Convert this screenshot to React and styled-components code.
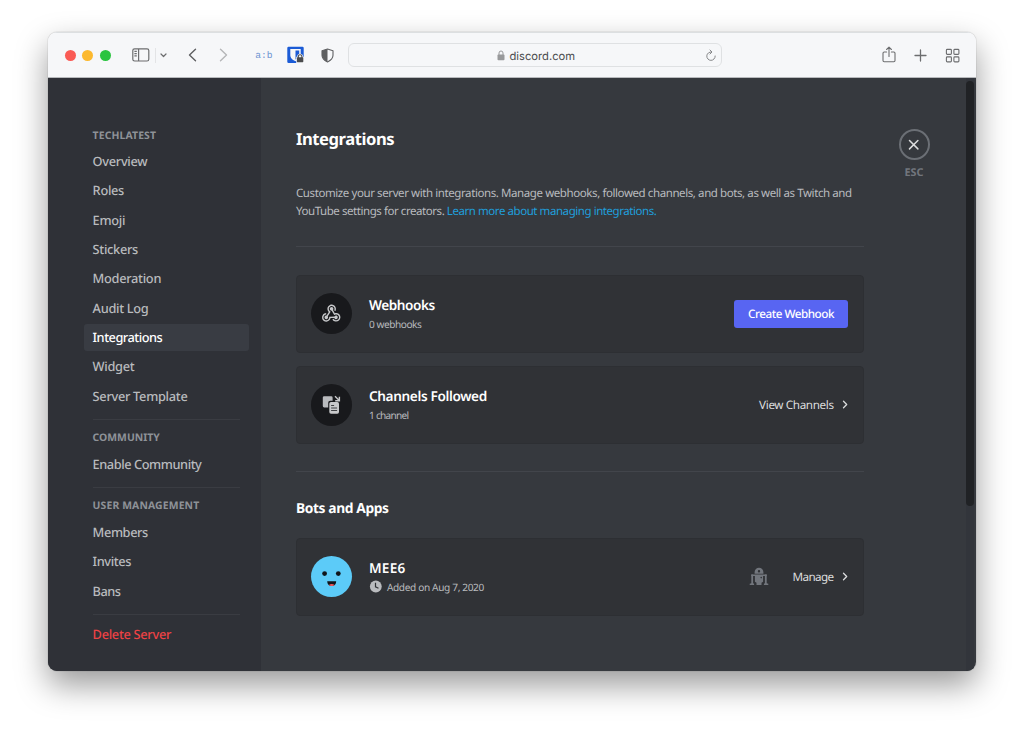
import React from 'react';
import styled, { createGlobalStyle } from 'styled-components';

const GlobalStyle = createGlobalStyle`
  * {
    box-sizing: border-box;
  }
  body {
    margin: 0;
    background-color: #ffffff;
    font-family: 'Noto Sans', 'Open Sans', sans-serif;
    text-rendering: geometricPrecision;
    overflow: hidden;
  }
  svg {
    display: block;
    flex-shrink: 0;
  }
`;

const Page = styled('div')`
  width: 1024px;
  height: 735px;
  padding: 32px 48px 64px;
`;

const Window = styled('div')`
  width: 928px;
  height: 639px;
  border-radius: 9px;
  overflow: hidden;
  display: flex;
  flex-direction: column;
  box-shadow: 0 0 1px rgba(0, 0, 0, 0.5), 0 14px 32px rgba(0, 0, 0, 0.4);
`;

const Toolbar = styled('header')`
  height: 46px;
  flex-shrink: 0;
  display: flex;
  align-items: center;
  background-color: #f6f7f9;
  border-top: 1px solid #dcdfe1;
  border-bottom: 1px solid #b8babd;
  padding: 0 16px 0 17px;
`;

const Lights = styled('div')`
  display: flex;
  gap: 6.4px;
`;

const Light = styled('span')`
  width: 11px;
  height: 11px;
  border-radius: 50%;
  background-color: ${(props) => props.$color};
`;

const Tool = styled('div')`
  margin-left: ${(props) => props.$gap}px;
`;

const ToolDivider = styled('span')`
  width: 1px;
  height: 15px;
  margin-left: 5px;
  background-color: #e3e4e6;
`;

const Shortcut = styled('span')`
  margin-left: 27px;
  width: 18px;
  font-family: 'Liberation Mono', monospace;
  font-size: 9.6px;
  color: #6f94d2;
`;

const AddressBar = styled('div')`
  width: 374px;
  height: 24px;
  margin-left: 14px;
  border: 1px solid #dfe1e3;
  border-radius: 6px;
  display: grid;
  grid-template-columns: 1fr auto 1fr;
  align-items: center;
  padding: 0 4px;
`;

const Address = styled('div')`
  grid-column: 2;
  display: flex;
  align-items: center;
  gap: 5px;
  padding: 1px 0 0 1px;
  font-family: Inter, sans-serif;
  font-size: 11.2px;
  color: #4a4b4d;
`;

const Reload = styled('div')`
  justify-self: end;
`;

const ToolsRight = styled('div')`
  margin-left: auto;
  display: flex;
  align-items: center;
  gap: 18px;
`;

const ShareTool = styled('div')`
  padding-bottom: 2px;
`;

const Body = styled('div')`
  flex: 1;
  min-height: 0;
  display: flex;
  background-color: #36393e;
`;

const Sidebar = styled('nav')`
  width: 213px;
  flex-shrink: 0;
  background-color: #2f3137;
  padding: 45.6px 11.7px 0 36px;
`;

const GroupTitle = styled('div')`
  height: 24.6px;
  line-height: 24.6px;
  padding-left: 8.6px;
  font-size: 10.4px;
  font-weight: 700;
  letter-spacing: ${(props) => props.$spacing || 0}px;
  color: #8e9297;
  white-space: nowrap;
`;

const NavItem = styled('div')`
  height: 27.3px;
  line-height: 27.3px;
  margin-bottom: 2px;
  padding-left: 8.6px;
  border-radius: 3px;
  font-size: 12.8px;
  font-weight: 500;
  letter-spacing: ${(props) => props.$spacing || -0.3}px;
  white-space: nowrap;
  color: ${(props) =>
    props.$danger ? '#ed4245' : props.$active ? '#ffffff' : '#b9bbbe'};
  background-color: ${(props) => (props.$active ? '#393c43' : 'transparent')};
`;

const NavDivider = styled('div')`
  height: 1px;
  margin: 9.3px 9px 6px;
  background-color: #3a3c42;
`;

const Main = styled('main')`
  width: 568px;
  margin-left: 35px;
`;

const Title = styled('h1')`
  margin: 49.4px 0 0;
  height: 24px;
  line-height: 24px;
  font-size: 16.6px;
  font-weight: 700;
  letter-spacing: ${(props) => props.$spacing}px;
  color: #ffffff;
`;

const Description = styled('p')`
  margin: 34px 0 0;
  font-size: 11.5px;
  line-height: 17.3px;
  color: #b9bbbe;
`;

const Line = styled('span')`
  display: block;
  white-space: nowrap;
  letter-spacing: ${(props) => props.$spacing}px;
`;

const Link = styled('a')`
  color: #1f9fdc;
`;

const Divider = styled('div')`
  height: 1px;
  margin: ${(props) => props.$margin};
  background-color: #42454b;
`;

const Card = styled('section')`
  height: 78px;
  margin-bottom: 13.4px;
  border: 1px solid #2d2f33;
  border-radius: 4px;
  background-color: #303236;
  padding: 0 15px 0.4px 13.5px;
  display: flex;
  align-items: center;
`;

const Avatar = styled('div')`
  width: 41.4px;
  height: 41.4px;
  border-radius: 50%;
  background-color: ${(props) => props.$color};
  display: flex;
  align-items: center;
  justify-content: center;
`;

const CardText = styled('div')`
  flex: 1;
  margin-left: 17px;
`;

const CardTitle = styled('div')`
  height: 20px;
  line-height: 20px;
  font-size: 13.6px;
  font-weight: 600;
  letter-spacing: ${(props) => props.$spacing || 0}px;
  color: #ffffff;
`;

const CardNote = styled('div')`
  height: 18px;
  font-size: 10.1px;
  letter-spacing: ${(props) => props.$spacing || 0}px;
  color: #b9bbbe;
  display: flex;
  align-items: center;
  gap: 5px;
`;

const Button = styled('button')`
  width: 114px;
  height: 28px;
  padding: 0;
  border: none;
  border-radius: 3px;
  background-color: #5865f2;
  font-family: inherit;
  font-size: 11.7px;
  font-weight: 500;
  letter-spacing: ${(props) => props.$spacing || 0}px;
  text-rendering: geometricPrecision;
  color: #ffffff;
`;

const Action = styled('div')`
  display: flex;
  align-items: center;
  gap: 8.4px;
  font-size: 11.7px;
  letter-spacing: ${(props) => props.$spacing || 0}px;
  color: #dcddde;
`;

const BotMark = styled('div')`
  margin-right: 23px;
`;

const Subtitle = styled('h2')`
  margin: 0 0 19px;
  height: 20px;
  line-height: 20px;
  font-size: 13.8px;
  font-weight: 700;
  letter-spacing: ${(props) => props.$spacing || 0}px;
  color: #ffffff;
`;

const Close = styled('div')`
  width: 32px;
  margin: 51px 0 0 34px;
  display: flex;
  flex-direction: column;
  align-items: center;
`;

const CloseCircle = styled('div')`
  width: 31px;
  height: 31px;
  border: 2px solid #6b6f75;
  border-radius: 50%;
  display: flex;
  align-items: center;
  justify-content: center;
`;

const CloseLabel = styled('div')`
  margin-top: 5px;
  line-height: 16px;
  font-size: 10.8px;
  font-weight: 700;
  color: #72767d;
`;

const ScrollTrack = styled('div')`
  width: 8px;
  margin-left: auto;
  margin-right: 2px;
  padding-top: 3px;
  background-color: #32353b;
`;

const ScrollThumb = styled('div')`
  width: 8px;
  height: 425px;
  border-radius: 4px;
  background-color: #202225;
`;

const SidebarIcon = () => (
  <svg width="18" height="14" viewBox="0 0 18 14" fill="none" stroke="#6c6d6f" strokeWidth="1.2">
    <rect x="0.8" y="0.8" width="16" height="12.2" rx="1.8" />
    <path d="M6.6 1v12M2.4 3.4h2.4M2.4 5.6h2.4M2.4 7.8h2.4" />
  </svg>
);

const Arrow = ({ d, color, w = 9, h = 14, stroke = 1.4 }) => (
  <svg width={w} height={h} viewBox={`0 0 ${w} ${h}`} fill="none" stroke={color} strokeWidth={stroke} strokeLinecap="round" strokeLinejoin="round">
    <path d={d} />
  </svg>
);

const VaultIcon = () => (
  <svg width="18" height="18" viewBox="0 0 18 18">
    <rect x="0.3" y="0.8" width="16.4" height="16.2" rx="1.2" fill="#1b5bd6" />
    <path d="M3.3 3h10.4v6.2c0 3-2.8 4.900-5.200 6-2.400-1.100-5.200-3-5.200-6z" fill="#f6f7f9" />
    <path d="M8.5 4.500h3.700v4.400c0 2-1.900 3.700-3.700 4.600z" fill="#1b5bd6" />
    <path d="M9.200 17.200v-6.500h1a2.900 2.900 0 0 1 5.800 0h1v6.500z" fill="#f6f7f9" />
    <rect x="9.900" y="11.200" width="6.400" height="5" rx="0.6" fill="#4a4b4d" />
    <path d="M11.300 12v-1.500a1.800 1.800 0 0 1 3.600 0V12" fill="none" stroke="#4a4b4d" strokeWidth="1.1" />
  </svg>
);

const ShieldIcon = () => (
  <svg width="13" height="15" viewBox="0 0 13 15">
    <path d="M6.500 1 12 2.700v4.600c0 3.100-2.600 5.300-5.500 6.600C3.600 12.600 1 10.400 1 7.300V2.700z" fill="none" stroke="#5e5f61" strokeWidth="1.1" strokeLinejoin="round" />
    <path d="M6.500 1v12.900C3.600 12.600 1 10.400 1 7.300V2.700z" fill="#5e5f61" />
  </svg>
);

const LockIcon = () => (
  <svg width="8" height="11" viewBox="0 0 8 11">
    <rect x="0.5" y="4.6" width="7" height="5.6" rx="0.9" fill="#98999b" />
    <path d="M2 5V3a2 2 0 0 1 4 0v2" fill="none" stroke="#98999b" strokeWidth="1" />
  </svg>
);

const ReloadIcon = () => (
  <svg width="12" height="13" viewBox="0 0 12 13" fill="none" stroke="#858688" strokeWidth="1" strokeLinecap="round" strokeLinejoin="round">
    <path d="M6.600 3A4.200 4.200 0 1 0 10.200 7M5 1l2 2-2 2" />
  </svg>
);

const ShareIcon = () => (
  <svg width="14" height="17" viewBox="0 0 14 17" fill="none" stroke="#6c6d6f" strokeWidth="1.1" strokeLinecap="round" strokeLinejoin="round">
    <path d="M4.600 6H2.200a1.200 1.200 0 0 0-1.200 1.200v7.300a1.200 1.200 0 0 0 1.200 1.200h9.600a1.200 1.200 0 0 0 1.200-1.200V7.200A1.200 1.200 0 0 0 11.800 6H9.400M7 10.500V1.200M4.600 3.500 7 1.100l2.400 2.400" />
  </svg>
);

const PlusIcon = () => (
  <svg width="13" height="13" viewBox="0 0 13 13" fill="none" stroke="#6c6d6f" strokeWidth="1.3" strokeLinecap="round">
    <path d="M6.500 1v11M1 6.500h11" />
  </svg>
);

const GridIcon = () => (
  <svg width="15" height="15" viewBox="0 0 15 15" fill="none" stroke="#6c6d6f" strokeWidth="1.1">
    <rect x="1.4" y="1.4" width="5" height="5" rx="0.9" />
    <rect x="8.9" y="1.4" width="5" height="5" rx="0.9" />
    <rect x="1.4" y="8.9" width="5" height="5" rx="0.9" />
    <rect x="8.9" y="8.9" width="5" height="5" rx="0.9" />
  </svg>
);

const WebhookIcon = () => (
  <svg width="22.5" height="22.5" viewBox="0 0 24 24" fill="#c8c9cb">
    <path d="M10.460 19C9 21.070 6.150 21.590 4.090 20.150C2.040 18.710 1.560 15.840 3 13.750C3.870 12.500 5.210 11.830 6.580 11.770L6.630 13.200C5.720 13.270 4.840 13.740 4.270 14.560C3.270 16 3.580 17.940 4.950 18.910C6.330 19.870 8.260 19.500 9.260 18.070C9.570 17.620 9.750 17.130 9.820 16.630V15.620L15.400 15.580L15.470 15.470C16 14.550 17.150 14.230 18.050 14.750C18.950 15.270 19.260 16.430 18.730 17.350C18.200 18.260 17.040 18.580 16.140 18.060C15.730 17.830 15.440 17.460 15.310 17.040L11.240 17.060C11.130 17.730 10.870 18.380 10.460 19M17.740 11.860C20.270 12.170 22.070 14.440 21.760 16.930C21.450 19.430 19.150 21.200 16.620 20.890C15.130 20.710 13.900 19.860 13.190 18.680L14.430 17.960C14.920 18.730 15.750 19.280 16.750 19.410C18.500 19.620 20.050 18.430 20.260 16.760C20.470 15.090 19.230 13.560 17.500 13.350C16.960 13.290 16.440 13.360 15.970 13.530L15.120 13.970L12.540 9.200H12.320C11.260 9.160 10.410 8.290 10.440 7.250C10.470 6.210 11.400 5.400 12.450 5.440C13.500 5.500 14.330 6.350 14.300 7.390C14.280 7.830 14.110 8.230 13.840 8.540L15.740 12.050C16.360 11.850 17.040 11.780 17.740 11.860M8.250 9.140C7.250 6.790 8.310 4.100 10.620 3.120C12.940 2.140 15.620 3.250 16.620 5.600C17.210 6.970 17.090 8.470 16.420 9.670L15.180 8.950C15.600 8.140 15.670 7.150 15.270 6.220C14.590 4.620 12.780 3.850 11.230 4.500C9.670 5.160 8.970 7 9.650 8.600C9.930 9.260 10.400 9.770 10.970 10.110L11.360 10.320L8.290 15.310C8.320 15.360 8.360 15.420 8.390 15.500C8.880 16.410 8.540 17.560 7.620 18.050C6.710 18.540 5.560 18.180 5.060 17.240C4.570 16.310 4.910 15.160 5.830 14.670C6.220 14.460 6.650 14.410 7.060 14.500L9.370 10.730C8.900 10.300 8.500 9.760 8.250 9.140Z" />
  </svg>
);

const FollowIcon = () => (
  <svg width="19" height="20" viewBox="0 0 19 20">
    <path d="M2.200 1.200h7a1.400 1.400 0 0 1 1.400 1.400v3.100H8.200a2 2 0 0 0-2 2v4.700H2.200a1.400 1.400 0 0 1-1.400-1.400V2.600a1.400 1.400 0 0 1 1.400-1.400z" fill="#b9bbbe" />
    <rect x="7.3" y="7" width="9.7" height="11.8" rx="1.7" fill="#c8c9cb" />
    <path d="M9.100 10.500h3M9.100 13h6M9.100 15.500h6" stroke="#303236" strokeWidth="0.9" />
    <path d="M13 1.300l4 4M17.400 1.800v4h-4.200" fill="none" stroke="#c8c9cb" strokeWidth="1.4" />
  </svg>
);

const FaceIcon = () => (
  <svg width="41" height="41" viewBox="0 0 41 41">
    <circle cx="13.6" cy="17.6" r="2.4" fill="#10151a" />
    <circle cx="27.3" cy="17.6" r="2.4" fill="#10151a" />
    <path d="M16.200 25.200h9c0 3-1.800 4.700-4.500 4.700s-4.500-1.700-4.500-4.700z" fill="#10151a" />
    <path d="M17.800 28.900c1.400-1.200 4.400-1.200 5.800 0-.8.800-1.800 1.100-2.900 1.100s-2.100-.3-2.900-1.100z" fill="#f0565b" />
  </svg>
);

const ClockIcon = () => (
  <svg width="13" height="13" viewBox="0 0 13 13">
    <circle cx="6.8" cy="6.5" r="5.9" fill="#b9bbbe" />
    <path d="M6.500 2.800v4l3 1.400" fill="none" stroke="#303236" strokeWidth="1.2" />
  </svg>
);

const RobotIcon = () => (
  <svg width="20" height="20" viewBox="0 0 20 20" fill="#72767d">
    <path fillRule="evenodd" d="M5.600 6.700V5.300a4.400 4.500 0 0 1 8.800 0v1.400zM10 3a1.200 1.200 0 1 0 0 2.400A1.200 1.200 0 0 0 10 3z" />
    <path d="M2.300 7.500h15.400v1.600H2.300zM5.900 7.500h8.200v7.300l-1.600 1V18h-5v-2.200l-1.600-1z" />
    <path d="M2.300 7.500h1.800v8.700l1 .6V18H.7v-1.200l1.600-.6zM15.900 7.500h1.800v8.700l1.600.6V18h-4.400v-1.200l1-.6z" />
    <circle cx="12.2" cy="10.6" r="0.8" fill="#303236" />
  </svg>
);

const Chevron = () => (
  <Arrow d="M1.500 1.300l3.200 3.200-3.200 3.200" color="#dcddde" w={6} h={9} stroke={1.3} />
);

const App = () => {
  return (
    <Page>
      <GlobalStyle />
      <Window>
        <Toolbar>
          <Lights>
            <Light $color="#fa5b55" />
            <Light $color="#fcb92f" />
            <Light $color="#2bc440" />
          </Lights>
          <Tool $gap={21.5}>
            <SidebarIcon />
          </Tool>
          <ToolDivider />
          <Tool $gap={4}>
            <Arrow d="M1 1l2.500 2.500L6 1" color="#6c6d6f" w={7} h={5} stroke={1.2} />
          </Tool>
          <Tool $gap={21}>
            <Arrow d="M7.500 1.200 1.500 7l6 5.800" color="#5e5f61" />
          </Tool>
          <Tool $gap={22}>
            <Arrow d="M1.500 1.200l6 5.800-6 5.800" color="#b5b6b8" />
          </Tool>
          <Shortcut>a:b</Shortcut>
          <Tool $gap={14}>
            <VaultIcon />
          </Tool>
          <Tool $gap={16}>
            <ShieldIcon />
          </Tool>
          <AddressBar>
            <Address>
              <LockIcon />
              discord.com
            </Address>
            <Reload>
              <ReloadIcon />
            </Reload>
          </AddressBar>
          <ToolsRight>
            <ShareTool>
              <ShareIcon />
            </ShareTool>
            <PlusIcon />
            <GridIcon />
          </ToolsRight>
        </Toolbar>
        <Body>
          <Sidebar>
            <GroupTitle $spacing={0.12}>TECHLATEST</GroupTitle>
            <NavItem>Overview</NavItem>
            <NavItem>Roles</NavItem>
            <NavItem>Emoji</NavItem>
            <NavItem>Stickers</NavItem>
            <NavItem>Moderation</NavItem>
            <NavItem>Audit Log</NavItem>
            <NavItem $active $spacing={-0.5}>Integrations</NavItem>
            <NavItem>Widget</NavItem>
            <NavItem>Server Template</NavItem>
            <NavDivider />
            <GroupTitle $spacing={0.01}>COMMUNITY</GroupTitle>
            <NavItem $spacing={-0.44}>Enable Community</NavItem>
            <NavDivider />
            <GroupTitle $spacing={0.13}>USER MANAGEMENT</GroupTitle>
            <NavItem $spacing={-0.4}>Members</NavItem>
            <NavItem $spacing={-0.4}>Invites</NavItem>
            <NavItem $spacing={-0.5}>Bans</NavItem>
            <NavDivider />
            <NavItem $danger>Delete Server</NavItem>
          </Sidebar>
          <Main>
            <Title $spacing={-0.45}>Integrations</Title>
            <Description>
              <Line $spacing={-0.41}>
                Customize your server with integrations. Manage webhooks,
                followed channels, and bots, as well as Twitch and
              </Line>
              <Line $spacing={-0.44}>
                YouTube settings for creators.{' '}
                <Link>Learn more about managing integrations.</Link>
              </Line>
            </Description>
            <Divider $margin="26px 0 27.800px" />
            <Card>
              <Avatar $color="#18191c">
                <WebhookIcon />
              </Avatar>
              <CardText>
                <CardTitle $spacing={-0.42}>Webhooks</CardTitle>
                <CardNote $spacing={-0.44}>0 webhooks</CardNote>
              </CardText>
              <Button $spacing={-0.48}>Create Webhook</Button>
            </Card>
            <Card>
              <Avatar $color="#18191c">
                <FollowIcon />
              </Avatar>
              <CardText>
                <CardTitle $spacing={-0.35}>Channels Followed</CardTitle>
                <CardNote $spacing={-0.7}>1 channel</CardNote>
              </CardText>
              <Action $spacing={-0.38}>
                View Channels
                <Chevron />
              </Action>
            </Card>
            <Divider $margin="27.200px 0 26.500px" />
            <Subtitle $spacing={-0.4}>Bots and Apps</Subtitle>
            <Card>
              <Avatar $color="#5ccbf8">
                <FaceIcon />
              </Avatar>
              <CardText>
                <CardTitle $spacing={0.3}>MEE6</CardTitle>
                <CardNote $spacing={-0.35}>
                  <ClockIcon />
                  Added on Aug 7, 2020
                </CardNote>
              </CardText>
              <BotMark>
                <RobotIcon />
              </BotMark>
              <Action $spacing={-0.6}>
                Manage
                <Chevron />
              </Action>
            </Card>
          </Main>
          <Close>
            <CloseCircle>
              <Arrow d="M1.500 1.500l8.400 8.400M9.900 1.500 1.500 9.900" color="#dcddde" w={11.4} h={11.4} stroke={1.5} />
            </CloseCircle>
            <CloseLabel>ESC</CloseLabel>
          </Close>
          <ScrollTrack>
            <ScrollThumb />
          </ScrollTrack>
        </Body>
      </Window>
    </Page>
  );
};

export default App;
